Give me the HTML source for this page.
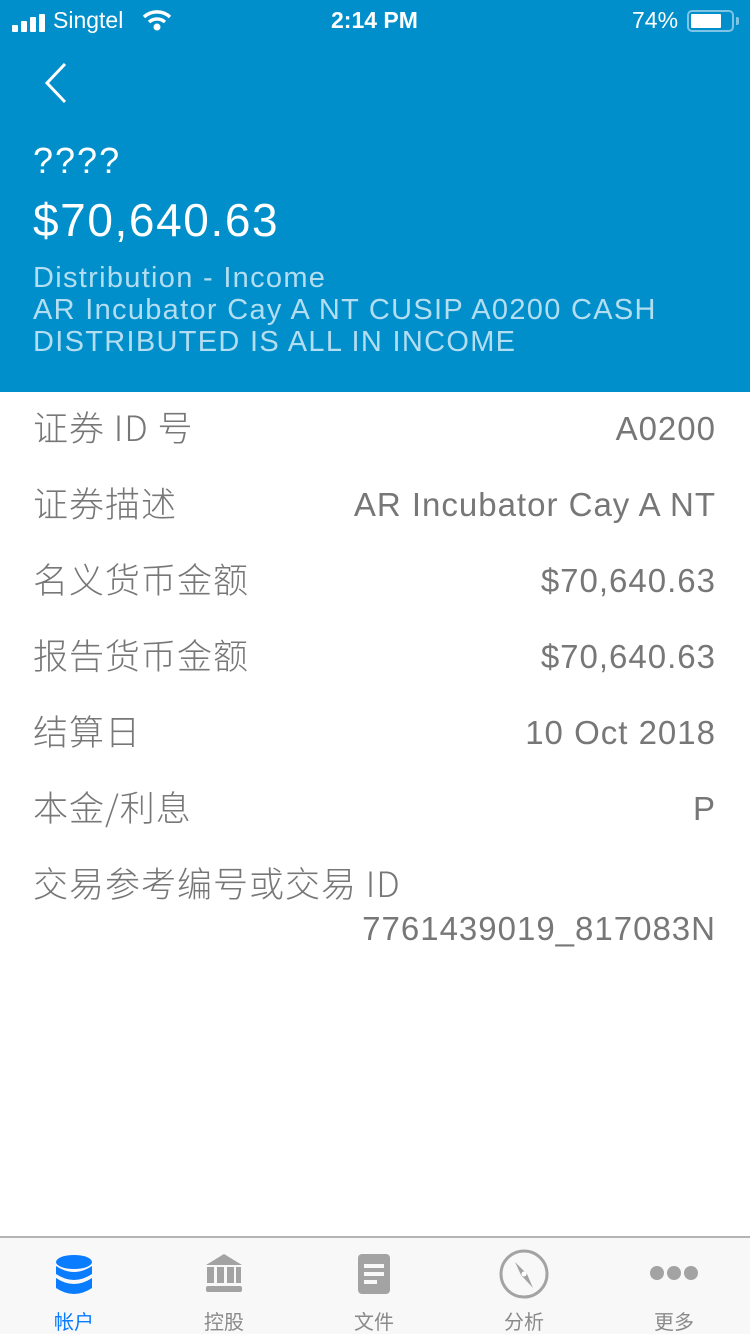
<!DOCTYPE html>
<html><head><meta charset="utf-8"><style>
*{margin:0;padding:0;box-sizing:border-box}
body{width:750px;height:1334px;overflow:hidden;background:#fff;font-family:"Liberation Sans","Noto Sans CJK SC",sans-serif;position:relative}
.hdr{position:absolute;left:0;top:0;width:750px;height:392px;background:#008fca;color:#fff}
.abs{position:absolute;white-space:nowrap}
.row{position:absolute;left:33px;right:34px;font-size:33px;color:#777;height:40px}
.row .k{position:absolute;left:0;top:-9px;font-size:35px;letter-spacing:1px;font-family:"Noto Sans CJK SC","Liberation Sans",sans-serif;font-weight:300}
.row .v{position:absolute;right:0;top:0;letter-spacing:1px}
.tab{position:absolute;top:1236px;left:0;width:750px;height:98px;background:#f8f8f8;border-top:2px solid #b4b4b4}
.lbl{position:absolute;top:1306px;font-size:20px;color:#8a8a8a;width:100px;text-align:center}
</style></head><body>
<div class="hdr">
 <div class="abs" style="left:12px;top:14px">
  <svg width="36" height="18"><rect x="0" y="11" width="6" height="7" rx="1" fill="#fff"/><rect x="9" y="7" width="6" height="11" rx="1" fill="#fff"/><rect x="18" y="3" width="6" height="15" rx="1" fill="#fff"/><rect x="27" y="0" width="6" height="18" rx="1" fill="#fff"/></svg>
 </div>
 <div class="abs" style="left:53px;top:7px;font-size:23px">Singtel</div>
 <svg class="abs" style="left:142px;top:9px" width="30" height="22" viewBox="0 0 30 22"><path d="M2 8 A19 19 0 0 1 28 8" stroke="#fff" stroke-width="3.5" fill="none"/><path d="M7 13 A12 12 0 0 1 23 13" stroke="#fff" stroke-width="3.5" fill="none"/><circle cx="15" cy="18" r="3.5" fill="#fff"/></svg>
 <div class="abs" style="left:331px;top:7px;font-size:23px;font-weight:bold">2:14 PM</div>
 <div class="abs" style="left:632px;top:7px;font-size:23px">74%</div>
 <div class="abs" style="left:687px;top:10px;width:47px;height:22px;border:2px solid #7fc4e4;border-radius:5px"><div style="position:absolute;left:2px;top:2px;width:30px;height:14px;background:#fff;border-radius:1px"></div></div>
 <div class="abs" style="left:736px;top:17px;width:3px;height:8px;background:#7fc4e4;border-radius:0 2px 2px 0"></div>
 <svg class="abs" style="left:42px;top:62px" width="28" height="42"><path d="M23 2 L5 21 L23 40" stroke="#fff" stroke-width="3" fill="none"/></svg>
 <div class="abs" style="left:33px;top:140px;font-size:36px;letter-spacing:2px">????</div>
 <div class="abs" style="left:33px;top:193px;font-size:46px;letter-spacing:1.6px">$70,640.63</div>
 <div class="abs" style="left:33px;top:262px;font-size:29px;color:#b3ddf0;line-height:32px;letter-spacing:1.3px">Distribution - Income<br>AR Incubator Cay A NT CUSIP A0200 CASH<br>DISTRIBUTED IS ALL IN INCOME</div>
</div>
<div class="row" style="top:410px"><span class="k">证券 ID 号</span><span class="v">A0200</span></div>
<div class="row" style="top:486px"><span class="k">证券描述</span><span class="v">AR Incubator Cay A NT</span></div>
<div class="row" style="top:562px"><span class="k">名义货币金额</span><span class="v">$70,640.63</span></div>
<div class="row" style="top:638px"><span class="k">报告货币金额</span><span class="v">$70,640.63</span></div>
<div class="row" style="top:714px"><span class="k">结算日</span><span class="v">10 Oct 2018</span></div>
<div class="row" style="top:790px"><span class="k">本金/利息</span><span class="v">P</span></div>
<div class="row" style="top:866px"><span class="k">交易参考编号或交易 ID</span></div>
<div class="row" style="top:910px"><span class="v">7761439019_817083N</span></div>
<div class="tab"></div>
<svg class="abs" style="left:55px;top:1254px" width="38" height="42"><ellipse cx="19" cy="8" rx="18" ry="7" fill="#0a7cff"/><path d="M1 12 Q19 24 37 12 V20 Q19 32 1 20Z" fill="#0a7cff"/><path d="M1 24 Q19 36 37 24 V34 Q19 46 1 34Z" fill="#0a7cff"/></svg>
<svg class="abs" style="left:205px;top:1254px" width="38" height="40"><path d="M19 0 L37 11 H1Z" fill="#a3a3a3"/><rect x="2" y="13" width="7" height="16" fill="#a3a3a3"/><rect x="12" y="13" width="7" height="16" fill="#a3a3a3"/><rect x="22" y="13" width="7" height="16" fill="#a3a3a3"/><rect x="31" y="13" width="5" height="16" fill="#a3a3a3"/><rect x="1" y="32" width="36" height="6" rx="2" fill="#a3a3a3"/></svg>
<svg class="abs" style="left:358px;top:1254px" width="34" height="42"><rect x="0" y="0" width="32" height="40" rx="4" fill="#a3a3a3"/><rect x="6" y="10" width="20" height="4" fill="#f8f8f8"/><rect x="6" y="18" width="20" height="4" fill="#f8f8f8"/><rect x="6" y="26" width="13" height="4" fill="#f8f8f8"/></svg>
<svg class="abs" style="left:498px;top:1248px" width="52" height="52"><circle cx="26" cy="26" r="23" stroke="#a3a3a3" stroke-width="3" fill="none"/><path d="M17 14 L29 26 L35 40 L23 27Z" fill="#a3a3a3"/><circle cx="26" cy="26" r="2.5" fill="#fff"/></svg>
<svg class="abs" style="left:650px;top:1265px" width="50" height="16"><circle cx="7" cy="8" r="7" fill="#a3a3a3"/><circle cx="24" cy="8" r="7" fill="#a3a3a3"/><circle cx="41" cy="8" r="7" fill="#a3a3a3"/></svg>
<div class="lbl" style="left:24px;color:#0a7cff">帐户</div>
<div class="lbl" style="left:174px">控股</div>
<div class="lbl" style="left:324px">文件</div>
<div class="lbl" style="left:474px">分析</div>
<div class="lbl" style="left:624px">更多</div>
</body></html>
